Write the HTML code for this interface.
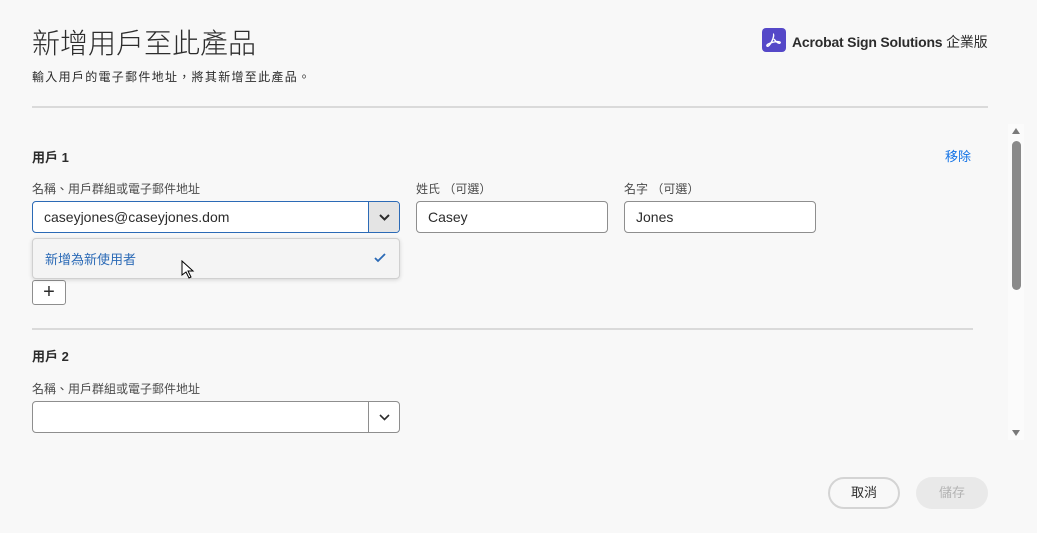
<!DOCTYPE html>
<html><head><meta charset="utf-8"><style>
*{box-sizing:border-box;margin:0;padding:0}
body{width:1037px;height:533px;background:#f8f8f8;font-family:"Liberation Sans","Noto Sans CJK TC",sans-serif;color:#2c2c2c;position:relative;overflow:hidden}
.a{position:absolute}
h1{position:absolute;left:32px;top:22px;font-size:28px;font-weight:300;color:#2c2c2c}
.lbl{font-size:12px;color:#4b4b4b}
.inp{position:absolute;height:32px;border:1px solid #8e8e8e;border-radius:4px;background:#fff;font-size:14px;padding:7px 11px;color:#2c2c2c}
.hr{position:absolute;height:2px;background:#dadada}
</style></head><body>
<h1>新增用戶至此產品</h1>
<div class="a" style="left:32px;top:68px;font-size:12px;letter-spacing:1.3px;color:#2c2c2c">輸入用戶的電子郵件地址，將其新增至此產品。</div>
<div class="a" style="left:762px;top:28px;width:24px;height:24px;border-radius:4px;background:#5548c8">
<svg width="24" height="24" viewBox="0 0 24 24"><path d="M11 6c1 0 1 3-1 7s-4 6-5 5 2-3 7-4 7 0 6 1-4-1-6-4" fill="none" stroke="#fff" stroke-width="1.4"/></svg></div>
<div class="a" style="left:792px;top:32px;font-size:14px;font-weight:bold;color:#2c2c2c;letter-spacing:-0.2px">Acrobat Sign Solutions <span style="font-weight:normal">企業版</span></div>
<div class="hr" style="left:32px;top:106px;width:956px"></div>
<div class="a" style="left:32px;top:147px;font-size:13px;font-weight:bold">用戶 1</div>
<div class="a" style="left:945px;top:146px;font-size:13px;color:#1473e6">移除</div>
<div class="a lbl" style="left:32px;top:180px">名稱、用戶群組或電子郵件地址</div>
<div class="a lbl" style="left:416px;top:180px">姓氏 （可選）</div>
<div class="a lbl" style="left:624px;top:180px">名字 （可選）</div>
<div class="inp" style="left:32px;top:201px;width:368px;border-color:#2b6ab6">caseyjones@caseyjones.dom</div>
<div class="a" style="left:368px;top:202px;width:31px;height:30px;background:#e4e4e4;border-left:1px solid #2b6ab6;border-radius:0 3px 3px 0">
<svg width="31" height="30"><path d="M11 13l4.5 4.5L20 13" fill="none" stroke="#2c2c2c" stroke-width="2"/></svg></div>
<div class="inp" style="left:416px;top:201px;width:192px">Casey</div>
<div class="inp" style="left:624px;top:201px;width:192px">Jones</div>
<div class="a" style="left:32px;top:280px;width:34px;height:25px;border:1px solid #8e8e8e;border-radius:3px;background:#fff;text-align:center;font-size:20px;line-height:22px">+</div>
<div class="a" style="left:32px;top:238px;width:368px;height:41px;background:#f4f4f4;border:1px solid #d0d0d0;border-radius:4px;box-shadow:0 1px 4px rgba(0,0,0,.15)">
<div class="a" style="left:12px;top:10px;font-size:13px;color:#2b6ab6">新增為新使用者</div>
<svg class="a" style="left:340px;top:12px" width="14" height="14"><path d="M2 7l3 3 7-7" fill="none" stroke="#2b6ab6" stroke-width="1.8"/></svg>
<svg class="a" style="left:148px;top:21px" width="14" height="20"><path d="M1 1v14l4-3 3 6 2-1-3-6h5z" fill="#fff" stroke="#000" stroke-width="1"/></svg>
</div>
<div class="hr" style="left:32px;top:328px;width:941px"></div>
<div class="a" style="left:32px;top:346px;font-size:13px;font-weight:bold">用戶 2</div>
<div class="a lbl" style="left:32px;top:380px">名稱、用戶群組或電子郵件地址</div>
<div class="inp" style="left:32px;top:401px;width:368px"></div>
<div class="a" style="left:368px;top:402px;width:31px;height:30px;border-left:1px solid #8e8e8e">
<svg width="31" height="30"><path d="M11 13l4.5 4.5L20 13" fill="none" stroke="#2c2c2c" stroke-width="1.6"/></svg></div>
<div class="a" style="left:1008px;top:124px;width:16px;height:316px;background:#fbfbfb"></div>
<svg class="a" style="left:1011px;top:127px" width="10" height="8"><path d="M1 7L5 1l4 6z" fill="#7a7a7a"/></svg>
<div class="a" style="left:1012px;top:141px;width:9px;height:149px;background:#8a8a8a;border-radius:5px"></div>
<svg class="a" style="left:1011px;top:429px" width="10" height="8"><path d="M1 1h8L5 7z" fill="#7a7a7a"/></svg>
<div class="a" style="left:828px;top:477px;width:72px;height:32px;border:2px solid #d4d4d4;border-radius:16px;text-align:center;font-size:13px;line-height:28px;color:#2c2c2c">取消</div>
<div class="a" style="left:916px;top:477px;width:72px;height:32px;background:#e9e9e9;border-radius:16px;text-align:center;font-size:13px;line-height:32px;color:#b3b3b3">儲存</div>
</body></html>
